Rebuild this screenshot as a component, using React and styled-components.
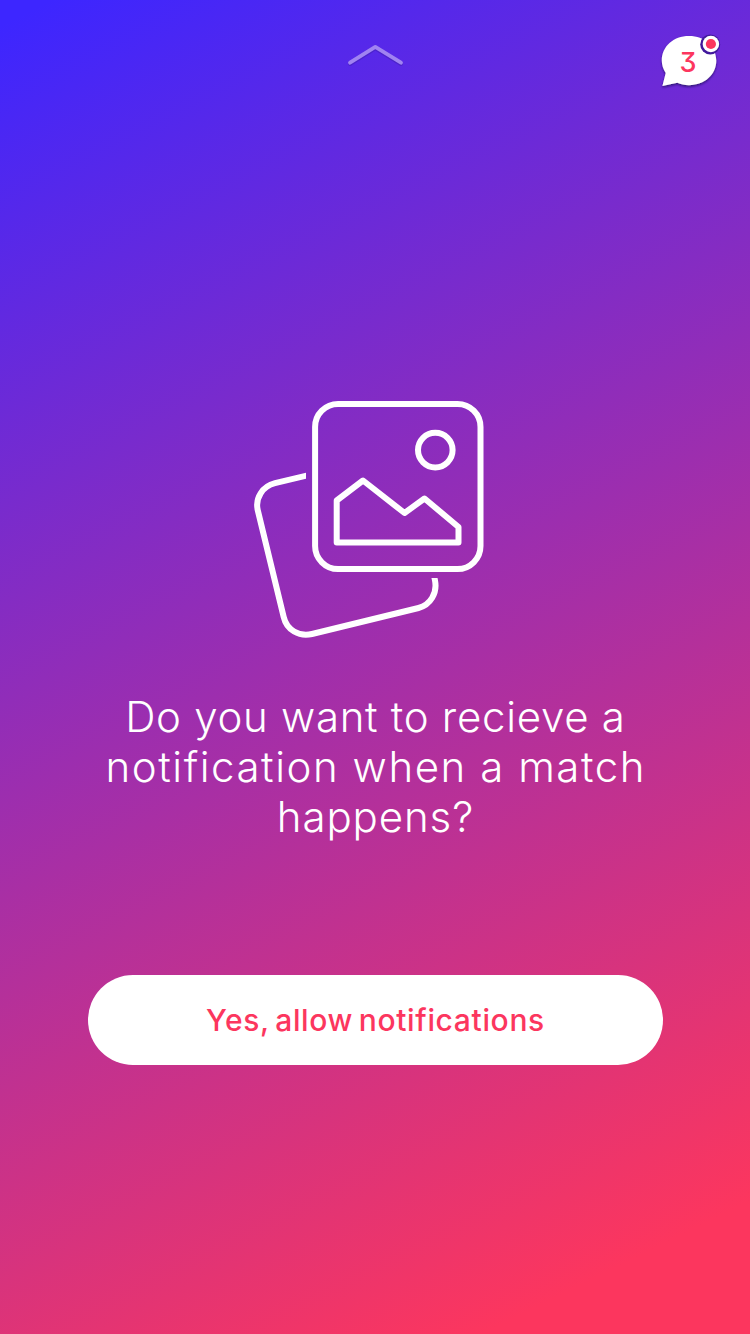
import React from "react";
import styled, { createGlobalStyle } from "styled-components";

const GlobalStyle = createGlobalStyle`
  *, *::before, *::after { box-sizing: border-box; }
  body { margin: 0; }
`;

const Screen = styled.main`
  display: flex;
  flex-direction: column;
  align-items: center;
  width: 750px;
  height: 1334px;
  overflow: hidden;
  background: linear-gradient(153.5deg, #3d26ff 1.5%, #fc365e 92.2%);
  color: #fff;
  font-family: Inter, "Open Sans", sans-serif;
`;

const Header = styled.header`
  display: grid;
  grid-template-columns: 1fr 60px 1fr;
  align-items: start;
  width: 100%;
  height: 100px;
  padding: 30px 26px 0;
`;

const PullHandle = styled.button`
  grid-column: 2;
  height: 50px;
  padding: 0;
  border: 0;
  background: none;
  line-height: 0;
`;

const MessagesButton = styled.button`
  grid-column: 3;
  justify-self: end;
  display: grid;
  width: 70px;
  height: 64px;
  padding: 0;
  border: 0;
  background: none;
  font-family: inherit;

  > * { grid-area: 1 / 1; }
`;

const MessageCount = styled.span`
  margin: 17px 0 0 4px;
  width: 60px;
  color: #fc365e;
  font-size: 27px;
  font-weight: 500;
  line-height: 32px;
  text-align: center;
  font-feature-settings: "cv09" 1;
`;

const Illustration = styled.svg`
  margin: 290px 12px 0 0;
  flex: none;
`;

const Question = styled.h1`
  display: flex;
  flex-direction: column;
  align-items: center;
  margin: 52px 0 0;
  font-size: 42px;
  font-weight: 340;
  line-height: 50px;
`;

const Line = styled.span`
  white-space: nowrap;
  letter-spacing: ${({ $spacing }) => $spacing}px;
  margin-right: ${({ $spacing }) => -$spacing}px;
`;

const AllowButton = styled.button`
  width: 575px;
  height: 90px;
  margin: 133px 0 0 1px;
  padding: 0;
  border: 0;
  border-radius: 45px;
  background: #fff;
  color: #fc365e;
  font: 500 30px/90px Inter, "Open Sans", sans-serif;
  letter-spacing: 0.65px;
  word-spacing: -3px;
  white-space: nowrap;
`;

function ChevronUp() {
  return (
    <svg width="60" height="50" viewBox="345 30 60 50" fill="none" strokeLinecap="round" strokeLinejoin="round">
      <path d="M350 64l25.3-15.8L401 64" stroke="#201060" strokeOpacity=".2" strokeWidth="4" />
      <path d="M350 62.700L375.300 46.900L401 62.700" stroke="#a083f1" strokeWidth="3.8" />
    </svg>
  );
}

function Bubble() {
  return (
    <svg width="70" height="64" viewBox="654 30 70 64">
      <defs>
        <filter id="bubbleShadow" x="-20%" y="-20%" width="140%" height="140%">
          <feDropShadow dx="0" dy="1.5" stdDeviation="1.2" floodColor="#1c0a55" floodOpacity=".75" />
        </filter>
      </defs>
      <path
        filter="url(#bubbleShadow)"
        fill="#fff"
        d="M689 36C704.500 36 716.300 46.500 716.300 60.600C716.300 74.700 704.500 85.200 689 85.200C684.700 85.200 680.800 84.300 677.300 82.700L662.400 86L665.700 73C663.200 69.400 661.800 65.200 661.800 60.600C661.800 46.500 673.500 36 689 36Z"
      />
      <circle cx="710.200" cy="44.400" r="10" fill="#42199c" />
      <circle cx="710.900" cy="44" r="8.300" fill="#fff" />
      <circle cx="710.900" cy="44" r="5.100" fill="#fc365e" />
    </svg>
  );
}

function Photos() {
  return (
    <Illustration
      width="240"
      height="250"
      viewBox="249 390 240 250"
      fill="none"
      stroke="#fff"
      strokeWidth="6"
      strokeLinejoin="round"
    >
      <defs>
        <clipPath id="behindPhoto">
          <path d="M249 390H306V578H489V640H249Z" />
        </clipPath>
      </defs>
      <path
        clipPath="url(#behindPhoto)"
        d="M312 474.300L275 483.200C262.500 486.300 255 498 257.700 510L283.700 617C286.700 630 299 637 312 634L418.500 608C430.500 605 437.500 593 435 580.500L433.500 573"
      />
      <rect x="315.100" y="404" width="165.400" height="165.100" rx="23" />
      <circle cx="435.300" cy="450.100" r="17.300" />
      <path d="M336.700 500.500L363 480.500L404.500 513L424.500 498.500L458.500 527V542.600H336.700Z" />
    </Illustration>
  );
}

export default function App() {
  return (
    <>
      <GlobalStyle />
      <Screen>
        <Header>
          <PullHandle aria-label="Pull up">
            <ChevronUp />
          </PullHandle>
          <MessagesButton>
            <Bubble />
            <MessageCount>3</MessageCount>
          </MessagesButton>
        </Header>
        <Photos />
        <Question>
          <Line $spacing={0.7}>Do you want to recieve a</Line>
          <Line $spacing={1.55}>notification when a match</Line>
          <Line $spacing={0.9}>happens?</Line>
        </Question>
        <AllowButton>Yes, allow notifications</AllowButton>
      </Screen>
    </>
  );
}
